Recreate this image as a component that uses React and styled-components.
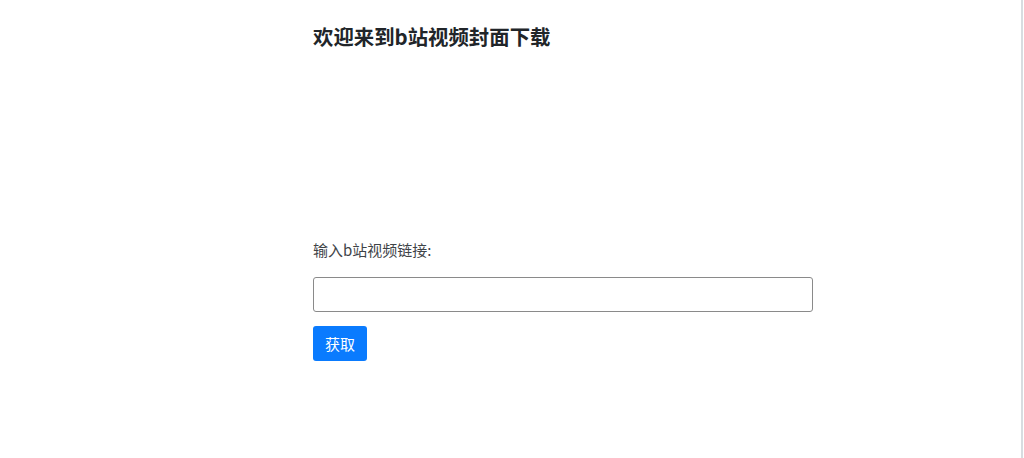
import React from "react";
import styled, { createGlobalStyle } from "styled-components";

const Global = createGlobalStyle`
  html, body { margin: 0; padding: 0; background: #fff; }
  body {
    font-family: "Noto Sans CJK SC", "Liberation Sans", sans-serif;
    color: #212529;
  }
`;

const Page = styled.div`
  height: 458px;
  display: flex;
  box-sizing: border-box;
  border-right: 2px solid #d8dce0;
  width: 1023px;
`;

const Container = styled.main`
  margin-left: 313px;
  width: 500px;
  display: flex;
  flex-direction: column;
`;

const Title = styled.h1`
  margin: 22px 0 0;
  font-size: 20.4px;
  line-height: 28px;
  font-weight: 700;
  color: #212529;
`;

const Spacer = styled.div`
  height: 190px;
`;

const Label = styled.label`
  font-size: 15px;
  line-height: 20px;
  color: #3f4448;
`;

const Input = styled.input`
  margin-top: 17px;
  box-sizing: border-box;
  width: 500px;
  height: 35px;
  border: 1px solid #8a8a8a;
  border-radius: 3px;
  padding: 4px 10px;
  font-size: 15px;
  outline: none;
`;

const Button = styled.button`
  margin-top: 14px;
  align-self: flex-start;
  width: 54px;
  height: 35px;
  border: none;
  border-radius: 3px;
  background: #0a7bfe;
  color: #fff;
  font-family: "Noto Sans CJK SC", sans-serif;
  font-size: 15px;
  padding: 0;
  cursor: pointer;
`;

export default function App() {
  return (
    <>
      <Global />
      <Page>
        <Container>
          <Title>欢迎来到b站视频封面下载</Title>
          <Spacer />
          <Label htmlFor="url">输入b站视频链接:</Label>
          <Input id="url" type="text" />
          <Button>获取</Button>
        </Container>
      </Page>
    </>
  );
}
